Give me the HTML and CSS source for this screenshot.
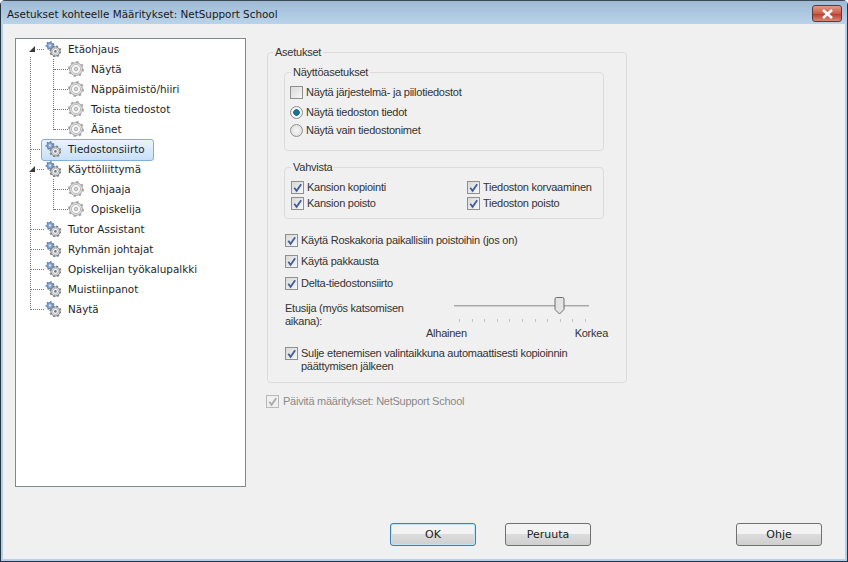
FILE: index.html
```html
<!DOCTYPE html>
<html lang="fi">
<head>
<meta charset="utf-8">
<title>Asetukset</title>
<link rel="stylesheet" href="styles.css">
</head>
<body>
<svg class="defs" width="0" height="0" aria-hidden="true">
  <defs>
    <g id="gear-gray">
      <circle cx="8" cy="8" r="6.4" fill="#e6e6e6" stroke="#a6a6a6" stroke-width="1"/>
      <circle cx="8" cy="8" r="7" fill="none" stroke="#a6a6a6" stroke-width="2" stroke-dasharray="2.4 3.1"/>
      <circle cx="8" cy="8" r="4.6" fill="#f8f8f8" stroke="#bdbdbd" stroke-width="1"/>
      <circle cx="8" cy="8" r="1.8" fill="#d6d6d6" stroke="#a5a5a5" stroke-width=".8"/>
    </g>
    <g id="gear-pair">
      <circle cx="5" cy="4.6" r="3.1" fill="#8aa8d0" stroke="#5f84b8" stroke-width="1"/>
      <circle cx="5" cy="4.6" r="3.8" fill="none" stroke="#5f84b8" stroke-width="1.4" stroke-dasharray="1.5 2"/>
      <circle cx="5" cy="4.6" r="1" fill="#e4ecf6"/>
      <circle cx="10.4" cy="10.4" r="4.6" fill="#e4e4e4" stroke="#828282" stroke-width="1"/>
      <circle cx="10.4" cy="10.4" r="5.2" fill="none" stroke="#828282" stroke-width="1.6" stroke-dasharray="2 2.1"/>
      <circle cx="10.4" cy="10.4" r="3" fill="#f8f8f8" stroke="#a6a6a6" stroke-width=".8"/>
      <circle cx="10.4" cy="10.4" r="1.3" fill="#5c7ca6"/>
    </g>
    <path id="tick" d="M2.5 6.2 L5 9.6 L10 2.4" fill="none" stroke="currentColor" stroke-width="2"/>
  </defs>
</svg>
<div class="window">
  <header class="titlebar">
    <span class="title">Asetukset kohteelle Määritykset: NetSupport School</span>
    <button class="close" type="button" aria-label="Sulje">
      <svg width="13" height="10" viewBox="0 0 13 10"><path d="M2 1 L11 9 M11 1 L2 9" stroke="#fff" stroke-width="2.6"/></svg>
    </button>
  </header>
  <main class="main">
    <nav class="tree">
      <ul class="level root">
        <li>
          <div class="node parent"><span class="expander"></span><svg class="icon" width="16" height="16"><use href="#gear-pair"/></svg><span class="label">Etäohjaus</span></div>
          <ul class="level children">
            <li><div class="node"><svg class="icon" width="16" height="16"><use href="#gear-gray"/></svg><span class="label">Näytä</span></div></li>
            <li><div class="node"><svg class="icon" width="16" height="16"><use href="#gear-gray"/></svg><span class="label">Näppäimistö/hiiri</span></div></li>
            <li><div class="node"><svg class="icon" width="16" height="16"><use href="#gear-gray"/></svg><span class="label">Toista tiedostot</span></div></li>
            <li><div class="node"><svg class="icon" width="16" height="16"><use href="#gear-gray"/></svg><span class="label">Äänet</span></div></li>
          </ul>
        </li>
        <li><div class="node selected"><svg class="icon" width="16" height="16"><use href="#gear-pair"/></svg><span class="label">Tiedostonsiirto</span></div></li>
        <li>
          <div class="node parent"><span class="expander"></span><svg class="icon" width="16" height="16"><use href="#gear-pair"/></svg><span class="label">Käyttöliittymä</span></div>
          <ul class="level children">
            <li><div class="node"><svg class="icon" width="16" height="16"><use href="#gear-gray"/></svg><span class="label">Ohjaaja</span></div></li>
            <li><div class="node"><svg class="icon" width="16" height="16"><use href="#gear-gray"/></svg><span class="label">Opiskelija</span></div></li>
          </ul>
        </li>
        <li><div class="node"><svg class="icon" width="16" height="16"><use href="#gear-pair"/></svg><span class="label">Tutor Assistant</span></div></li>
        <li><div class="node"><svg class="icon" width="16" height="16"><use href="#gear-pair"/></svg><span class="label">Ryhmän johtajat</span></div></li>
        <li><div class="node"><svg class="icon" width="16" height="16"><use href="#gear-pair"/></svg><span class="label">Opiskelijan työkalupalkki</span></div></li>
        <li><div class="node"><svg class="icon" width="16" height="16"><use href="#gear-pair"/></svg><span class="label">Muistiinpanot</span></div></li>
        <li><div class="node"><svg class="icon" width="16" height="16"><use href="#gear-pair"/></svg><span class="label">Näytä</span></div></li>
      </ul>
    </nav>
    <section class="settings">
      <fieldset class="group outer">
        <legend>Asetukset</legend>
        <fieldset class="group display">
          <legend>Näyttöasetukset</legend>
          <div class="opt first"><span class="box"></span><span>Näytä järjestelmä- ja piilotiedostot</span></div>
          <div class="opt second"><span class="radio on"></span><span>Näytä tiedoston tiedot</span></div>
          <div class="opt"><span class="radio"></span><span>Näytä vain tiedostonimet</span></div>
        </fieldset>
        <fieldset class="group confirm">
          <legend>Vahvista</legend>
          <div class="confirm-grid">
            <div class="opt"><span class="box"><svg width="11" height="11" viewBox="0 0 12 12"><use href="#tick"/></svg></span><span>Kansion kopiointi</span></div>
            <div class="opt"><span class="box"><svg width="11" height="11" viewBox="0 0 12 12"><use href="#tick"/></svg></span><span>Tiedoston korvaaminen</span></div>
            <div class="opt"><span class="box"><svg width="11" height="11" viewBox="0 0 12 12"><use href="#tick"/></svg></span><span>Kansion poisto</span></div>
            <div class="opt"><span class="box"><svg width="11" height="11" viewBox="0 0 12 12"><use href="#tick"/></svg></span><span>Tiedoston poisto</span></div>
          </div>
        </fieldset>
        <div class="opt plain recycle"><span class="box"><svg width="11" height="11" viewBox="0 0 12 12"><use href="#tick"/></svg></span><span>Käytä Roskakoria paikallisiin poistoihin (jos on)</span></div>
        <div class="opt plain pack"><span class="box"><svg width="11" height="11" viewBox="0 0 12 12"><use href="#tick"/></svg></span><span>Käytä pakkausta</span></div>
        <div class="opt plain delta"><span class="box"><svg width="11" height="11" viewBox="0 0 12 12"><use href="#tick"/></svg></span><span>Delta-tiedostonsiirto</span></div>
        <div class="priority">
          <div class="priority-label">Etusija (myös katsomisen aikana):</div>
          <div class="slider">
            <div class="track"></div>
            <svg class="thumb" width="11" height="18" viewBox="0 0 11 18"><path d="M1 2 Q1 .5 2.5 .5 H8.5 Q10 .5 10 2 V12.5 L5.5 17 L1 12.5 Z" fill="#e4e4e4" stroke="#6d6d6d"/></svg>
            <div class="ticks"><i></i><i></i><i></i><i></i><i></i><i></i><i></i><i></i><i></i><i></i><i></i></div>
            <div class="ends"><span>Alhainen</span><span>Korkea</span></div>
          </div>
        </div>
        <div class="opt plain wrap"><span class="box"><svg width="11" height="11" viewBox="0 0 12 12"><use href="#tick"/></svg></span><span>Sulje etenemisen valintaikkuna automaattisesti kopioinnin päättymisen jälkeen</span></div>
      </fieldset>
      <div class="opt update"><span class="box disabled"><svg width="11" height="11" viewBox="0 0 12 12"><use href="#tick"/></svg></span><span>Päivitä määritykset: NetSupport School</span></div>
    </section>
  </main>
  <footer class="footer">
    <button class="btn default" type="button">OK</button>
    <button class="btn" type="button">Peruuta</button>
    <button class="btn help" type="button">Ohje</button>
  </footer>
</div>
</body>
</html>
```
FILE: styles.css
```css
* { box-sizing: border-box; }
html, body { margin: 0; padding: 0; }
body {
  width: 848px;
  height: 562px;
  overflow: hidden;
  font-family: "DejaVu Sans", sans-serif;
  color: #222;
  background: #fff;
}
.defs { position: absolute; }
ul { list-style: none; margin: 0; padding: 0; }

.window {
  width: 848px;
  height: 562px;
  display: flex;
  flex-direction: column;
  border: 1px solid #26343f;
  border-top-color: #3c4a56;
  border-radius: 5px 5px 0 0;
  background: #b5cfe6;
  padding: 0 2px 2px 2px;
}
.titlebar {
  height: 23px;
  flex: none;
  display: flex;
  align-items: flex-start;
  justify-content: space-between;
  margin: 0 -2px;
  padding: 0 5px 0 6px;
  background: linear-gradient(#9fbad4, #b9d3ea);
}
.title {
  margin-top: 6px;
  font-size: 10.4px;
  line-height: 14px;
  color: #1a1a1a;
}
.close {
  width: 30px;
  height: 17px;
  margin-top: 4px;
  padding: 0;
  display: flex;
  align-items: center;
  justify-content: center;
  border: 1px solid #5c3a3a;
  border-radius: 3px;
  background: linear-gradient(#dd9c90, #cf5a45 50%, #b9402f 55%, #d88a78);
}

.main {
  flex: 1;
  display: flex;
  align-items: flex-start;
  padding: 14px 0 0 12px;
  background: #f0f0f0;
  min-height: 0;
}
.tree {
  width: 231px;
  height: 449px;
  flex: none;
  border: 1px solid #828790;
  background: #fff;
  font-size: 10.4px;
  color: #1e1e1e;
}
.level { position: relative; }
.root::before {
  content: "";
  position: absolute;
  left: 14px;
  top: 18px;
  height: 253px;
  border-left: 1px dotted #777;
}
.children::before {
  content: "";
  position: absolute;
  left: 37px;
  top: 0;
  bottom: 9px;
  border-left: 1px dotted #777;
}
.node {
  position: relative;
  height: 20px;
  display: flex;
  align-items: center;
  padding-left: 29px;
}
.node::before {
  content: "";
  position: absolute;
  left: 15px;
  top: 10px;
  width: 13px;
  border-top: 1px dotted #777;
}
.label { margin-left: 7px; }
.children .node { padding-left: 52px; }
.children .node::before { left: 38px; width: 14px; }
.expander {
  position: absolute;
  z-index: 1;
  left: 11px;
  top: 6px;
  width: 9px;
  height: 8px;
  background: #fff;
}
.expander::after {
  content: "";
  position: absolute;
  left: 2px;
  top: 1px;
  border-style: solid;
  border-width: 0 0 6px 6px;
  border-color: transparent transparent #3a3a3a transparent;
}
.selected::after {
  content: "";
  position: absolute;
  left: 25px;
  top: 0;
  width: 111px;
  height: 20px;
  border: 1px solid #84acdd;
  border-radius: 3px;
  background: linear-gradient(#eaf3fd, #c9dff7);
}
.selected .icon, .selected .label { position: relative; z-index: 1; }

.settings {
  width: 361px;
  margin-left: 21px;
  font-family: "Liberation Sans", sans-serif;
  font-size: 11px;
  letter-spacing: -0.25px;
  color: #333;
}
.group {
  margin: 0;
  border: 1px solid #dcdcdc;
  border-radius: 4px;
  min-width: 0;
}
.group legend {
  padding: 0 2px;
  line-height: 14px;
  height: 14px;
}
.outer {
  width: 360px;
  height: 338px;
  margin: 7px 0 0 0;
  padding: 6px 22px 0 5px;
}
.outer > legend { margin-left: 0; }
.display {
  height: 86px;
  margin-left: 11px;
  padding: 4px 0 0 5px;
}
.display legend { margin-left: 1px; }
.confirm {
  height: 59px;
  margin: 9px 0 0 11px;
  padding: 0 0 0 6px;
}
.confirm legend { margin-left: 0; }
.opt {
  display: flex;
  align-items: center;
  gap: 3px;
  height: 16px;
  line-height: 13px;
  white-space: nowrap;
}
.display .first { height: 18px; }
.display .second { margin-top: 2px; height: 18px; }
.display .opt:last-child { height: 18px; }
.confirm-grid {
  margin-top: 5px;
  display: grid;
  grid-template-columns: 176px 1fr;
  grid-auto-rows: 16px;
}
.box {
  width: 13px;
  height: 13px;
  flex: none;
  display: flex;
  align-items: center;
  justify-content: center;
  border: 1px solid #8e8f8f;
  background: linear-gradient(135deg, #d9d9d9, #f6f6f6);
  color: #44609a;
}
.box.disabled { color: #aaa; border-color: #b9b9b9; background: #f0f0f0; }
.radio {
  width: 13px;
  height: 13px;
  flex: none;
  border-radius: 50%;
  border: 1px solid #8e8f8f;
  background: radial-gradient(circle, #f6f6f6, #d9d9d9);
}
.radio.on {
  background: radial-gradient(circle, #1c6f97 0 3px, #f2f2f2 3.5px);
}
.plain { margin-left: 12px; }
.recycle { margin-top: 13px; }
.pack { margin-top: 5px; }
.delta { margin-top: 6px; }
.priority {
  display: flex;
  margin-top: 6px;
  margin-left: 12px;
}
.priority-label {
  width: 140px;
  flex: none;
  line-height: 13px;
  padding-top: 5px;
}
.slider {
  position: relative;
  width: 182px;
  flex: none;
  height: 46px;
  margin-left: 1px;
}
.track {
  position: absolute;
  left: 28px;
  width: 135px;
  top: 8px;
  height: 2px;
  background: #cfcfcf;
  border-top: 1px solid #a8a8a8;
}
.thumb {
  position: absolute;
  left: 128px;
  top: 0;
}
.ticks {
  position: absolute;
  left: 33px;
  width: 127px;
  top: 22px;
  display: flex;
  justify-content: space-between;
}
.ticks i {
  width: 1px;
  height: 3px;
  background: #c4c4c4;
}
.ends {
  position: absolute;
  left: 0;
  right: 0;
  top: 30px;
  display: flex;
  justify-content: space-between;
}
.wrap {
  height: 26px;
  margin-top: 4px;
  align-items: flex-start;
  white-space: normal;
  width: 296px;
}
.update {
  margin-top: 10px;
  margin-left: -1px;
  gap: 4px;
  color: #8a8a8a;
}

.footer {
  flex: none;
  height: 42px;
  background: #f0f0f0;
  display: flex;
  align-items: flex-start;
  gap: 29px;
  padding: 6px 23px 0 387px;
}
.btn {
  width: 86px;
  height: 23px;
  padding: 0;
  font-family: "DejaVu Sans", sans-serif;
  font-size: 11px;
  color: #222;
  border: 1px solid #707070;
  border-radius: 3px;
  background: linear-gradient(#f3f3f3 45%, #dcdcdc 50%, #cfcfcf);
}
.btn.default {
  border-color: #3c7fb1;
  box-shadow: inset 0 0 0 1px #bfe4f5;
}
.btn.help { margin-left: auto; }
```
